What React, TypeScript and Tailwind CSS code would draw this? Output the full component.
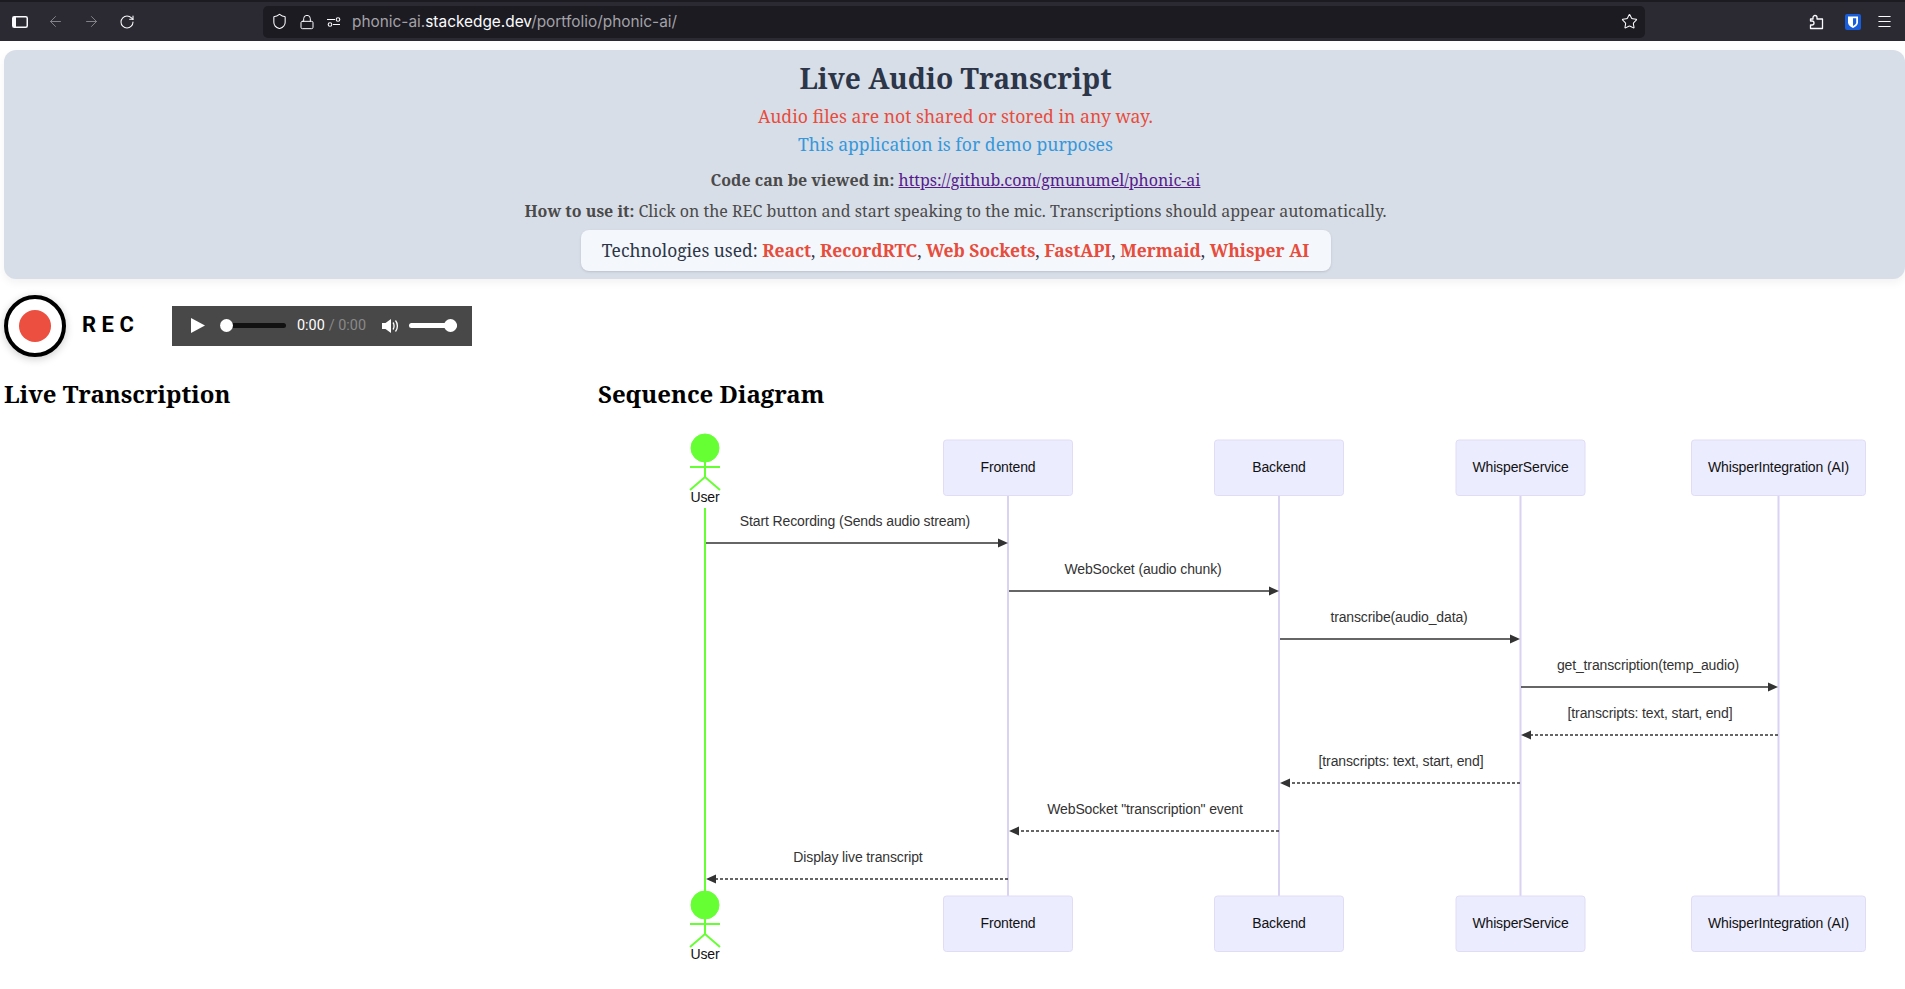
import { ArrowLeft, ArrowRight, RotateCw, Shield, Lock, Star, Menu } from "lucide-react";

const actors = [
  { name: "Frontend", x: 1008, w: 129 },
  { name: "Backend", x: 1279, w: 129 },
  { name: "WhisperService", x: 1520.5, w: 129 },
  { name: "WhisperIntegration (AI)", x: 1778.5, w: 174 },
];

const messages = [
  { label: "Start Recording (Sends audio stream)", from: 706, to: 1008, y: 543, tx: 855 },
  { label: "WebSocket (audio chunk)", from: 1009, to: 1279, y: 591, tx: 1143 },
  { label: "transcribe(audio_data)", from: 1280, to: 1520, y: 639, tx: 1399 },
  { label: "get_transcription(temp_audio)", from: 1521, to: 1778, y: 687, tx: 1648 },
  { label: "[transcripts: text, start, end]", from: 1778, to: 1521, y: 735, tx: 1650, dashed: true },
  { label: "[transcripts: text, start, end]", from: 1520, to: 1280, y: 783, tx: 1401, dashed: true },
  { label: 'WebSocket "transcription" event', from: 1279, to: 1009, y: 831, tx: 1145, dashed: true },
  { label: "Display live transcript", from: 1008, to: 706, y: 879, tx: 858, dashed: true },
];

function StickFigure({ top }: { top: number }) {
  return (
    <g>
      <circle cx={705} cy={top + 14} r={14} fill="#66ff33" stroke="#66ff33" />
      <path d={`M705 ${top + 28} V${top + 44} M690 ${top + 33} H720 M690 ${top + 56} L705 ${top + 43} L720 ${top + 56}`} stroke="#66ff33" strokeWidth={2} fill="none" />
      <text x={705} y={top + 68} textAnchor="middle" fontSize={14} letterSpacing={-0.13} fill="#111">User</text>
    </g>
  );
}

function ActorBox({ name, x, w, y }: { name: string; x: number; w: number; y: number }) {
  return (
    <g>
      <rect x={x - w / 2} y={y} width={w} height={55.5} rx={3} fill="#ececff" stroke="#e0dcf6" strokeWidth={1} />
      <text x={x} y={y + 32} textAnchor="middle" fontSize={14} letterSpacing={-0.13} fill="#111">{name}</text>
    </g>
  );
}

function SequenceDiagram() {
  return (
    <svg viewBox="598 430 1307 559" width={1307} height={559} className="block" style={{ fontFamily: '"Liberation Sans", sans-serif' }}>
      <line x1={705} y1={508} x2={705} y2={892} stroke="#66ff33" strokeWidth={2} />
      {actors.map(a => (
        <line key={a.name} x1={a.x} y1={496} x2={a.x} y2={896} stroke="#d9d2f3" strokeWidth={2} />
      ))}
      <StickFigure top={434} />
      <StickFigure top={891} />
      {actors.map(a => <ActorBox key={a.name} {...a} y={440} />)}
      {actors.map(a => <ActorBox key={a.name + "-b"} {...a} y={896} />)}
      {messages.map(m => {
        const dir = m.to > m.from ? 1 : -1;
        return (
          <g key={m.label + m.y}>
            <text x={m.tx} y={m.y - 17} textAnchor="middle" fontSize={14} letterSpacing={-0.13} fill="#333">{m.label}</text>
            <line x1={m.from} y1={m.y} x2={m.to - dir * 8} y2={m.y} stroke="#333" strokeWidth={1.3} strokeDasharray={m.dashed ? "3 2" : undefined} />
            <path d={`M${m.to} ${m.y} l${-dir * 10} -4.5 v9 z`} fill="#333" />
          </g>
        );
      })}
    </svg>
  );
}

function BrowserBar() {
  return (
    <div className="h-[41px] bg-[#2b2a33] border-t-2 border-[#1c1b22] flex items-center text-[#fbfbfe]">
      <svg width="16" height="16" viewBox="0 0 16 16" className="ml-[12px]">
        <rect x="0.75" y="2.75" width="14.5" height="10.5" rx="1.5" fill="none" stroke="#fbfbfe" strokeWidth="1.5" />
        <rect x="1" y="3" width="3" height="10" fill="#fbfbfe" />
      </svg>
      <ArrowLeft size={17} strokeWidth={1.4} className="ml-[19px] text-[#85848b]" />
      <ArrowRight size={17} strokeWidth={1.4} className="ml-[19px] text-[#85848b]" />
      <RotateCw size={16} strokeWidth={1.6} className="ml-[19px]" />
      <div className="ml-[128px] w-[1382px] h-[32px] rounded-[5px] bg-[#1c1b22] flex items-center">
        <Shield size={17} strokeWidth={1.5} className="ml-[8px]" />
        <Lock size={16} strokeWidth={1.5} className="ml-[11px]" />
        <svg width="16" height="16" viewBox="0 0 16 16" className="ml-[11px]" fill="none" stroke="#fbfbfe" strokeWidth="1.1">
          <path d="M1 5.5H9M14 10.5H7" />
          <circle cx="12" cy="5.5" r="1.8" />
          <circle cx="4" cy="10.5" r="1.8" />
        </svg>
        <span className="ml-[10px] text-[15.4px] text-[#a3a2a8] font-['Inter',sans-serif]">
          phonic-ai.<span className="text-[#fbfbfe]">stackedge.dev</span>/portfolio/phonic-ai/
        </span>
        <Star size={17} strokeWidth={1.5} className="ml-auto mr-[7px]" />
      </div>
      <svg width="16" height="16" viewBox="0 0 16 16" className="ml-[163px]" fill="none" stroke="#fbfbfe" strokeWidth="1.3" strokeLinejoin="round">
        <path d="M7 1.5a2 2 0 0 1 2 2V5h5.5v9.5H2.5V11H4a2 2 0 0 0 0-4H2.5V5H5V3.5a2 2 0 0 1 2-2Z" />
      </svg>
      <svg width="16" height="16" viewBox="0 0 16 16" className="ml-[21px]">
        <rect width="16" height="16" rx="2" fill="#175ddc" />
        <path d="M3 2.5H13V8.5C13 11 10.5 12.8 8 14C5.5 12.8 3 11 3 8.5Z" fill="#fff" />
        <path d="M8 4.2H11.2V8.5C11.2 10 9.6 11.2 8 12Z" fill="#175ddc" />
      </svg>
      <Menu size={17} strokeWidth={1.5} className="ml-[15px]" />
    </div>
  );
}

function AudioPlayer() {
  return (
    <div className="ml-[37px] w-[300px] h-[40px] bg-[#484848] flex items-center text-white font-['Roboto',sans-serif] text-[14.4px]">
      <svg width="14" height="15" viewBox="0 0 14 15" className="ml-[19px]"><path d="M0 0 L14 7.5 L0 15Z" fill="#fff" /></svg>
      <div className="relative ml-[15px] w-[66px] h-[5px] rounded-full bg-[#111]">
        <div className="absolute -left-[0.5px] -top-1 w-[13px] h-[13px] rounded-full bg-white" />
      </div>
      <span className="ml-[11px]">0:00</span>
      <span className="ml-[4px] text-[#8a8a8a]">/ 0:00</span>
      <svg width="17" height="16" viewBox="0 0 17 16" className="ml-[16px]">
        <path d="M0 5H3.5L9 1V15L3.5 11H0Z" fill="#fff" />
        <path d="M11 4.5C12.4 6.2 12.4 9.8 11 11.5M13.5 2.5C16 5.5 16 10.5 13.5 13.5" stroke="#fff" strokeWidth="1.3" fill="none" />
      </svg>
      <div className="relative ml-[10px] w-[48px] h-[5px] rounded-full bg-white">
        <div className="absolute right-0 -top-1 w-[13px] h-[13px] rounded-full bg-white" />
      </div>
    </div>
  );
}

export default function App() {
  return (
    <div className="h-[989px] overflow-hidden bg-white font-['Noto_Serif','Liberation_Serif',serif]">
      <BrowserBar />

      <div className="pt-[9px] pl-1">
        <div className="h-[229px] pl-[2px] rounded-xl bg-[#d8dee8] shadow-[0_4px_8px_rgba(0,0,0,0.05)] flex flex-col items-center">
          <h1 className="mt-2 text-[28.2px] leading-[40px] font-bold text-[#2c3648]">Live Audio Transcript</h1>
          <p className="mt-[4px] text-[17.6px] leading-[28px] text-[#e74c3c]">Audio files are not shared or stored in any way.</p>
          <p className="text-[17.6px] leading-[28px] text-[#3498db]">This application is for demo purposes</p>
          <p className="mt-[8px] text-[16px] leading-[28px] text-[#4a4a4a]">
            <b>Code can be viewed in:</b>{" "}
            <a href="#" className="text-[#551a8b] underline">https://github.com/gmunumel/phonic-ai</a>
          </p>
          <p className="mt-[3px] text-[16px] leading-[28px] text-[#4a4a4a]">
            <b>How to use it:</b> Click on the REC button and start speaking to the mic. Transcriptions should appear automatically.
          </p>
          <div className="mt-[5px] w-[750px] h-[41px] rounded-lg bg-[#f4f7fb] shadow-sm flex items-center justify-center text-[17.4px] text-[#2c3648]">
            <span>
              Technologies used: <b className="text-[#e74c3c]">React</b>, <b className="text-[#e74c3c]">RecordRTC</b>, <b className="text-[#e74c3c]">Web Sockets</b>, <b className="text-[#e74c3c]">FastAPI</b>, <b className="text-[#e74c3c]">Mermaid</b>, <b className="text-[#e74c3c]">Whisper AI</b>
            </span>
          </div>
        </div>

        <div className="mt-[15px] flex items-center h-[63px]">
          <div className="w-[62px] h-[62px] rounded-full border-[4px] border-black bg-white shadow-[0_2px_8px_rgba(0,0,0,0.2)] flex items-center justify-center">
            <div className="w-8 h-8 rounded-full bg-[#ec4f40]" />
          </div>
          <span className="ml-[16px] w-[53px] text-[22px] leading-[22px] -mt-[2px] font-bold tracking-[5.5px] text-black font-['Roboto',sans-serif]">REC</span>
          <AudioPlayer />
        </div>

        <div className="mt-[21px] flex">
          <div className="w-[594px]">
            <h2 className="text-[24px] leading-[32px] font-bold text-black">Live Transcription</h2>
          </div>
          <div className="flex-1">
            <h2 className="text-[24px] leading-[32px] font-bold text-black">Sequence Diagram</h2>
            <div className="mt-[20px]"><SequenceDiagram /></div>
          </div>
        </div>
      </div>
    </div>
  );
}
